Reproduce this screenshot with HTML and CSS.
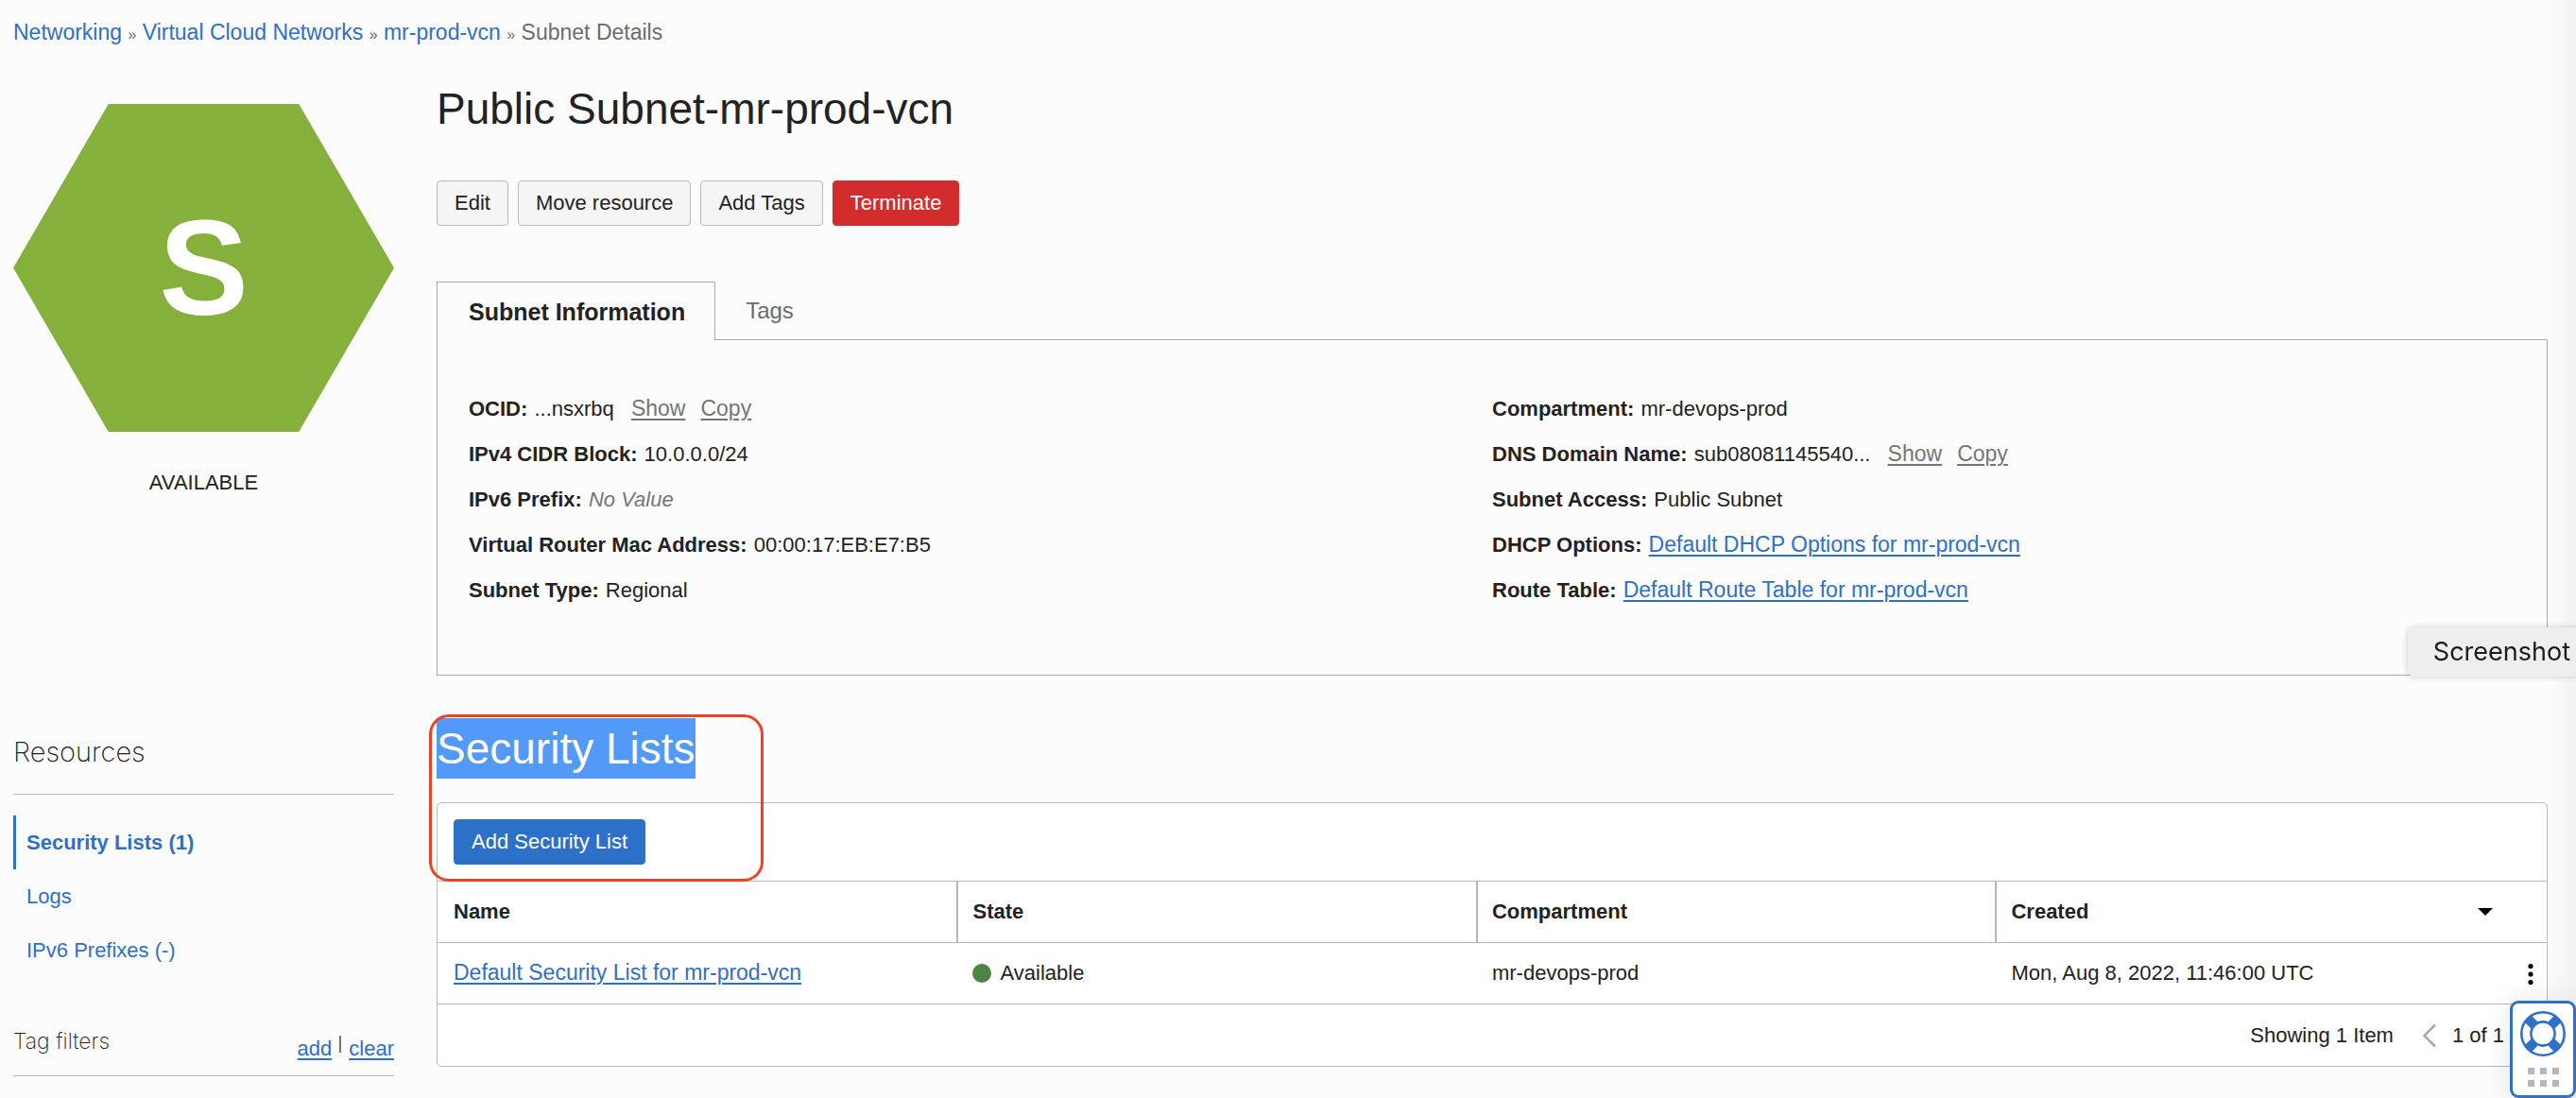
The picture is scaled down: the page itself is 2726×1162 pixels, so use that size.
FILE: index.html
```html
<!DOCTYPE html>
<html lang="en">
<head>
<meta charset="utf-8">
<title>Subnet Details</title>
<link rel="stylesheet" href="styles.css">
</head>
<body>
<nav class="breadcrumb" aria-label="Breadcrumb">
  <a href="#">Networking</a> <span class="sep">»</span>
  <a href="#">Virtual Cloud Networks</a> <span class="sep">»</span>
  <a href="#">mr-prod-vcn</a> <span class="sep">»</span>
  <span>Subnet Details</span>
</nav>

<div class="layout">
  <aside class="status">
    <div class="hexagon">S</div>
    <p class="status-text">AVAILABLE</p>
  </aside>

  <main class="details">
    <h1 class="title">Public Subnet-mr-prod-vcn</h1>
    <div class="actions">
      <button class="btn" type="button">Edit</button>
      <button class="btn" type="button">Move resource</button>
      <button class="btn" type="button">Add Tags</button>
      <button class="btn btn-danger" type="button">Terminate</button>
    </div>
    <div class="tabs" role="tablist">
      <button class="tab tab-active" type="button" role="tab" aria-selected="true">Subnet Information</button>
      <button class="tab" type="button" role="tab" aria-selected="false">Tags</button>
    </div>
    <section class="info">
      <ul class="facts">
        <li><strong>OCID:</strong> ...nsxrbq <a class="aux" href="#">Show</a><a class="aux" href="#">Copy</a></li>
        <li><strong>IPv4 CIDR Block:</strong> 10.0.0.0/24</li>
        <li><strong>IPv6 Prefix:</strong> <em>No Value</em></li>
        <li><strong>Virtual Router Mac Address:</strong> 00:00:17:EB:E7:B5</li>
        <li><strong>Subnet Type:</strong> Regional</li>
      </ul>
      <ul class="facts">
        <li><strong>Compartment:</strong> mr-devops-prod</li>
        <li><strong>DNS Domain Name:</strong> sub08081145540... <a class="aux" href="#">Show</a><a class="aux" href="#">Copy</a></li>
        <li><strong>Subnet Access:</strong> Public Subnet</li>
        <li><strong>DHCP Options:</strong> <a class="link" href="#">Default DHCP Options for mr-prod-vcn</a></li>
        <li><strong>Route Table:</strong> <a class="link" href="#">Default Route Table for mr-prod-vcn</a></li>
      </ul>
    </section>
  </main>

  <aside class="sidebar">
    <h2 class="side-title">Resources</h2>
    <ul class="side-list">
      <li><a class="side-item side-item-active" href="#">Security Lists (1)</a></li>
      <li><a class="side-item" href="#">Logs</a></li>
      <li><a class="side-item" href="#">IPv6 Prefixes (-)</a></li>
    </ul>
    <div class="filters">
      <h2 class="filters-title">Tag filters</h2>
      <div class="filters-links"><a class="aux-blue" href="#">add</a><span class="bar"></span><a class="aux-blue" href="#">clear</a></div>
    </div>
  </aside>

  <section class="lists">
    <h2 class="title"><span class="selected">Security Lists</span></h2>
    <div class="card">
      <div class="toolbar"><button class="btn btn-primary" type="button">Add Security List</button></div>
      <table class="grid">
        <colgroup><col><col><col><col><col class="col-menu"></colgroup>
        <thead>
          <tr>
            <th scope="col">Name</th>
            <th scope="col">State</th>
            <th scope="col">Compartment</th>
            <th scope="col" colspan="2">
              <div class="sortable">Created
                <button class="icon-btn" type="button" aria-label="Sort by created"><svg width="16" height="8" viewBox="0 0 16 8"><path d="M0 0H16L8 8Z"/></svg></button>
              </div>
            </th>
          </tr>
        </thead>
        <tbody>
          <tr>
            <td><a class="link" href="#">Default Security List for mr-prod-vcn</a></td>
            <td><span class="state"><span class="dot"></span>Available</span></td>
            <td>mr-devops-prod</td>
            <td>Mon, Aug 8, 2022, 11:46:00 UTC</td>
            <td class="menu-cell"><button class="icon-btn" type="button" aria-label="Row actions"><svg width="6" height="24" viewBox="0 0 6 24"><circle cx="3" cy="3.5" r="2.6"/><circle cx="3" cy="12" r="2.6"/><circle cx="3" cy="20.5" r="2.6"/></svg></button></td>
          </tr>
        </tbody>
      </table>
      <div class="pager">
        <span>Showing 1 Item</span>
        <button class="icon-btn pager-prev" type="button" aria-label="Previous page"><svg width="16" height="26" viewBox="0 0 16 26"><path d="M14 1.5L2.5 13L14 24.5" fill="none" stroke="#a9a9a9" stroke-width="2.6"/></svg></button>
        <span>1 of 1</span>
      </div>
    </div>
    <div class="highlight"></div>
  </section>
</div>

<div class="edge-shade"></div>
<div class="tooltip">Screenshot</div>
<button class="help" type="button" aria-label="Help">
  <svg width="48" height="48" viewBox="0 0 48 48" fill="none" stroke="#2d72c8">
    <path d="M14.8 14.8L8.4 8.4M33.2 14.8L39.6 8.4M14.8 33.2L8.4 39.6M33.2 33.2L39.6 39.6" stroke-width="10"/>
    <circle cx="24" cy="24" r="22.7" stroke-width="2.6"/>
    <circle cx="24" cy="24" r="12.6" stroke-width="2.6" fill="#fff"/>
  </svg>
  <svg width="33" height="20" viewBox="0 0 33 20" fill="#b3b8c0">
    <path d="M0 0h7v7H0zM13 0h7v7h-7zM26 0h7v7h-7zM0 13h7v7H0zM13 13h7v7h-7zM26 13h7v7h-7z"/>
  </svg>
</button>
</body>
</html>
```
FILE: styles.css
```css
* {
  box-sizing: border-box;
}

body {
  margin: 0;
  padding: 0 30px 0 14px;
  background: #fcfcfc;
  color: #222;
  font: 22px/28px "Liberation Sans", Arial, sans-serif;
}

h1, h2, p, ul {
  margin: 0;
  padding: 0;
  font-weight: 400;
  list-style: none;
}

a {
  color: #2d70c8;
  text-decoration: none;
}

button {
  font: inherit;
  color: inherit;
}

svg {
  display: block;
}

.breadcrumb {
  padding-top: 20px;
  font-size: 23px;
  color: #6b6b6b;
}

.sep {
  font-size: 16px;
  line-height: 1;
}

.layout {
  display: grid;
  grid-template-columns: 403px minmax(0, 1fr);
  column-gap: 45px;
  row-gap: 45px;
}

/* Status badge */
.status {
  padding-top: 62px;
}

.hexagon {
  display: flex;
  align-items: center;
  justify-content: center;
  height: 347px;
  background: #85b03c;
  clip-path: polygon(25% 0, 75% 0, 100% 50%, 75% 100%, 25% 100%, 0 50%);
  color: #fff;
  font-size: 142px;
  font-weight: 700;
  line-height: 160px;
}

.status-text {
  margin-top: 40px;
  text-align: center;
}

/* Subnet details */
.details {
  padding-top: 35px;
}

.title {
  font-size: 46px;
  line-height: 64px;
}

.actions {
  display: flex;
  gap: 10px;
  margin-top: 44px;
}

.btn {
  height: 48px;
  padding: 0 18px;
  border: 1px solid #b6bac1;
  border-radius: 4px;
  background: #f5f5f5;
}

.btn-danger {
  border-color: #d32c2c;
  background: #d32c2c;
  color: #fff;
}

.btn-primary {
  border-color: #2d70c8;
  background: #2d70c8;
  color: #fff;
}

.tabs {
  display: flex;
  margin-top: 59px;
}

.tab {
  height: 61px;
  padding: 0 32px;
  border: 0;
  background: none;
  color: #6b6b6b;
  font-size: 24px;
}

.tab-active {
  z-index: 1;
  height: 62px;
  margin-bottom: -1px;
  padding: 0 31px 0 33px;
  border: 1px solid #a9a9a9;
  border-bottom: 0;
  background: #fcfcfc;
  color: #222;
  font-size: 25px;
  font-weight: 700;
}

.info {
  display: grid;
  grid-template-columns: 1fr 1fr;
  padding: 49px 33px 65px;
  border: 1px solid #a9a9a9;
}

.facts {
  line-height: 48px;
}

.facts strong {
  margin-right: 1px;
}

.facts em {
  color: #757575;
}

.link,
.aux,
.aux-blue {
  text-decoration: underline;
  text-decoration-thickness: 2px;
  text-underline-offset: 3px;
}

.link,
.aux {
  font-size: 23px;
  line-height: 1;
}

.aux {
  margin-left: 12px;
  color: #757575;
}

.aux + .aux {
  margin-left: 16px;
}

/* Resource navigation */
.sidebar {
  padding-top: 16px;
}

.side-title {
  padding-bottom: 24px;
  border-bottom: 1px solid #b3b8c0;
  font: 200 29px/40px Inter, sans-serif;
}

.side-list {
  margin-top: 22px;
}

.side-item {
  display: block;
  padding-left: 11px;
  border-left: 3px solid transparent;
  line-height: 57px;
}

.side-item-active {
  border-color: #2d70c8;
  font-weight: 700;
}

.filters {
  display: flex;
  justify-content: space-between;
  margin-top: 52px;
  padding-bottom: 14px;
  border-bottom: 1px solid #b3b8c0;
}

.filters-title {
  font: 200 23px/32px Inter, sans-serif;
}

.filters-links {
  display: flex;
  gap: 8px;
  padding-top: 10px;
}

.bar {
  width: 2px;
  height: 18px;
  background: #757575;
}

/* Security lists */
.lists {
  position: relative;
}

.selected {
  display: inline-block;
  background: #5299f8;
  color: #fff;
}

.highlight {
  position: absolute;
  top: -4px;
  left: -8px;
  width: 354px;
  height: 177px;
  border: 3px solid #ef4223;
  border-radius: 21px;
  pointer-events: none;
}

.card {
  margin-top: 25px;
  border: 1px solid #b6bac1;
  border-radius: 5px;
  background: #fff;
}

.toolbar {
  padding: 17px;
  border-bottom: 1px solid #b3b8c0;
}

.grid {
  width: 100%;
  table-layout: fixed;
  border-collapse: separate;
  border-spacing: 0;
}

.col-menu {
  width: 34px;
}

.grid th,
.grid td {
  height: 65px;
  padding: 0 17px;
  border-bottom: 1px solid #b3b8c0;
  text-align: left;
}

.grid th + th {
  padding-left: 15px;
  border-left: 2px solid #b3b8c0;
}

.sortable {
  display: flex;
  align-items: center;
  justify-content: space-between;
  padding-right: 40px;
}

.icon-btn {
  padding: 0;
  border: 0;
  background: none;
  vertical-align: middle;
}

.grid .menu-cell {
  padding: 0 14px;
}

.state {
  display: flex;
  align-items: center;
  gap: 9px;
}

.dot {
  width: 20px;
  height: 20px;
  border-radius: 50%;
  background: #4b8443;
}

.pager {
  display: flex;
  align-items: center;
  justify-content: flex-end;
  height: 65px;
  padding-right: 45px;
}

.pager-prev {
  margin: 0 16px 0 30px;
}

/* Floating items */
.edge-shade {
  position: fixed;
  top: 0;
  right: 0;
  bottom: 0;
  width: 30px;
  background: linear-gradient(to right, rgba(0, 0, 0, 0), rgba(0, 0, 0, 0.04));
  pointer-events: none;
}

.tooltip {
  position: fixed;
  top: 664px;
  right: 0;
  padding: 0 6px 0 27px;
  border-radius: 6px 0 0 6px;
  background: #eee;
  box-shadow: 0 0 6px rgba(0, 0, 0, 0.2);
  color: #1c1c1c;
  font: 27px/52px Inter, sans-serif;
}

.help {
  position: fixed;
  right: 0;
  bottom: 0;
  display: flex;
  flex-direction: column;
  align-items: center;
  gap: 12px;
  width: 70px;
  height: 103px;
  padding: 8px 0 0;
  border: 3px solid #2d72c8;
  border-radius: 9px;
  background: #fff;
  box-shadow: 0 0 32px rgba(0, 0, 0, 0.1);
}
```
